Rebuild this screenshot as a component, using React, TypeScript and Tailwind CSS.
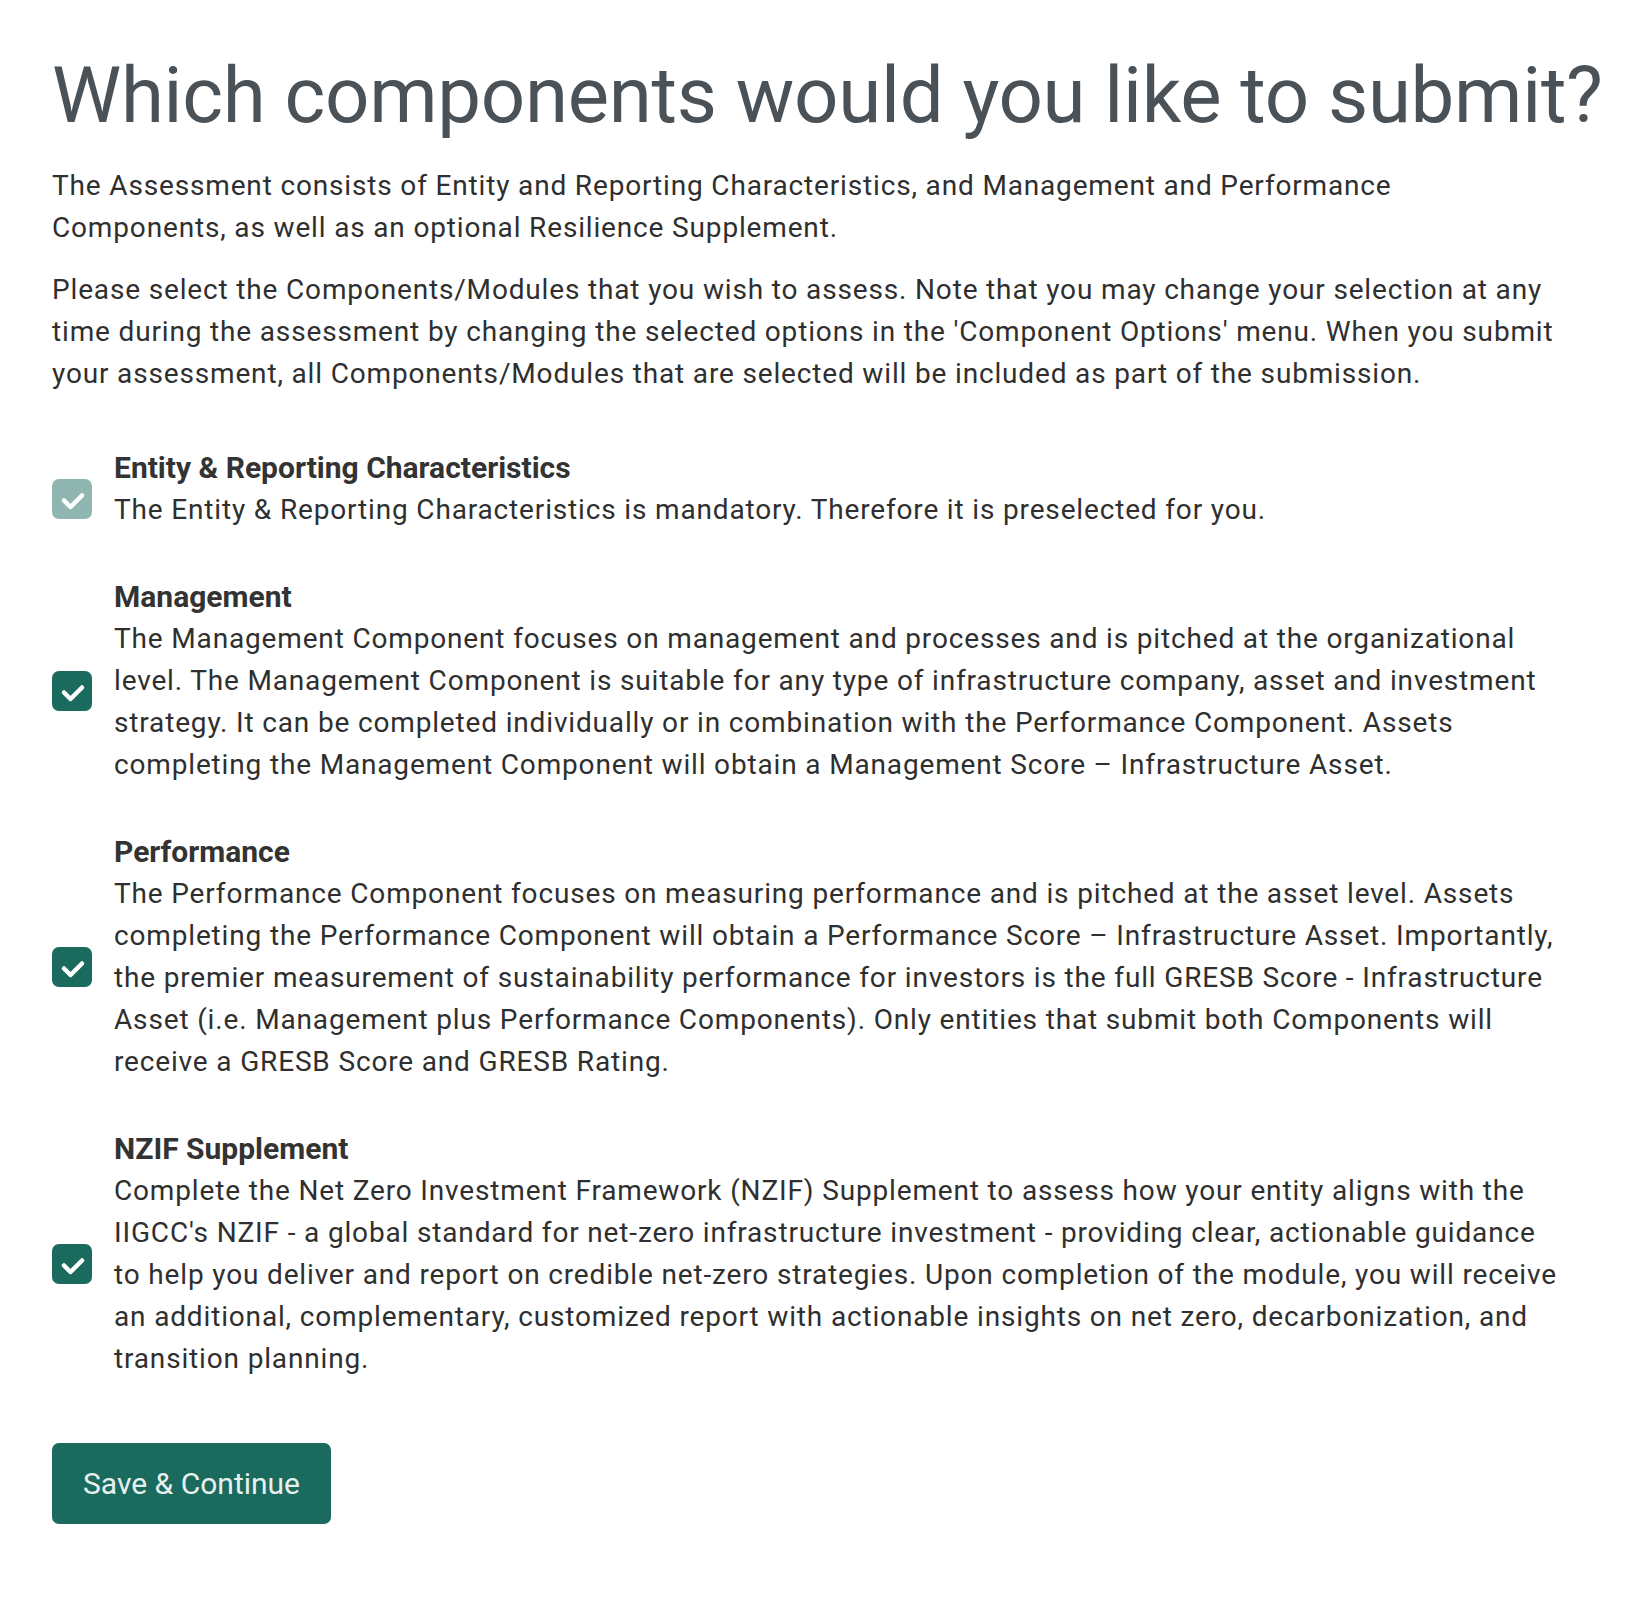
import React from "react";

type Item = { title: string; lines: string[]; disabled?: boolean };

const items: Item[] = [
  {
    title: "Entity & Reporting Characteristics",
    lines: ["The Entity & Reporting Characteristics is mandatory. Therefore it is preselected for you."],
    disabled: true,
  },
  {
    title: "Management",
    lines: [
      "The Management Component focuses on management and processes and is pitched at the organizational",
      "level. The Management Component is suitable for any type of infrastructure company, asset and investment",
      "strategy. It can be completed individually or in combination with the Performance Component. Assets",
      "completing the Management Component will obtain a Management Score \u2013 Infrastructure Asset.",
    ],
  },
  {
    title: "Performance",
    lines: [
      "The Performance Component focuses on measuring performance and is pitched at the asset level. Assets",
      "completing the Performance Component will obtain a Performance Score \u2013 Infrastructure Asset. Importantly,",
      "the premier measurement of sustainability performance for investors is the full GRESB Score - Infrastructure",
      "Asset (i.e. Management plus Performance Components). Only entities that submit both Components will",
      "receive a GRESB Score and GRESB Rating.",
    ],
  },
  {
    title: "NZIF Supplement",
    lines: [
      "Complete the Net Zero Investment Framework (NZIF) Supplement to assess how your entity aligns with the",
      "IIGCC's NZIF - a global standard for net-zero infrastructure investment - providing clear, actionable guidance",
      "to help you deliver and report on credible net-zero strategies. Upon completion of the module, you will receive",
      "an additional, complementary, customized report with actionable insights on net zero, decarbonization, and",
      "transition planning.",
    ],
  },
];

function Checkbox({ disabled }: { disabled?: boolean }) {
  return (
    <div
      className={
        "mt-[20px] flex h-[40px] w-[40px] shrink-0 items-center justify-center rounded-[7px] " +
        (disabled ? "bg-[#8fb6b1]" : "bg-[#1a6a5e]")
      }
    >
      <svg width="40" height="40" viewBox="0 0 40 40" fill="none">
        <path d="M12 21.5 L18.5 28 L30 16.5" stroke="#ffffff" strokeWidth="4.5" strokeLinecap="round" strokeLinejoin="round" />
      </svg>
    </div>
  );
}

function Lines({ lines }: { lines: string[] }) {
  return (
    <>
      {lines.map((l, i) => (
        <span key={i} className="block whitespace-nowrap">
          {l}
        </span>
      ))}
    </>
  );
}

export default function App() {
  return (
    <div
      className="min-h-[1600px] bg-white px-[52px] pt-[49px] text-[#2f2f2f]"
      style={{ fontFamily: "Roboto, 'Liberation Sans', sans-serif" }}
    >
      <h1 className="whitespace-nowrap text-[78px] font-normal leading-[94px] tracking-[-0.3px] text-[#4a5157]">
        Which components would you like to submit?
      </h1>
      <p className="mt-[22px] text-[28px] leading-[42px] tracking-[0.03em]">
        <Lines
          lines={[
            "The Assessment consists of Entity and Reporting Characteristics, and Management and Performance",
            "Components, as well as an optional Resilience Supplement.",
          ]}
        />
      </p>
      <p className="mt-[20px] text-[28px] leading-[42px] tracking-[0.03em]">
        <Lines
          lines={[
            "Please select the Components/Modules that you wish to assess. Note that you may change your selection at any",
            "time during the assessment by changing the selected options in the 'Component Options' menu. When you submit",
            "your assessment, all Components/Modules that are selected will be included as part of the submission.",
          ]}
        />
      </p>

      <div className="mt-[52px] flex flex-col gap-[45px]">
        {items.map((it) => (
          <label key={it.title} className="flex items-center gap-[22px]">
            <Checkbox disabled={it.disabled} />
            <div className="text-[28px] leading-[42px] tracking-[0.03em]">
              <span className="block text-[30px] font-bold tracking-normal text-[#333333]">{it.title}</span>
              <Lines lines={it.lines} />
            </div>
          </label>
        ))}
      </div>

      <button className="mt-[63px] flex h-[81px] w-[279px] items-center justify-center rounded-[7px] bg-[#1a6a5e] text-[30px] tracking-normal text-[#e8f0ef]">
        Save &amp; Continue
      </button>
    </div>
  );
}
